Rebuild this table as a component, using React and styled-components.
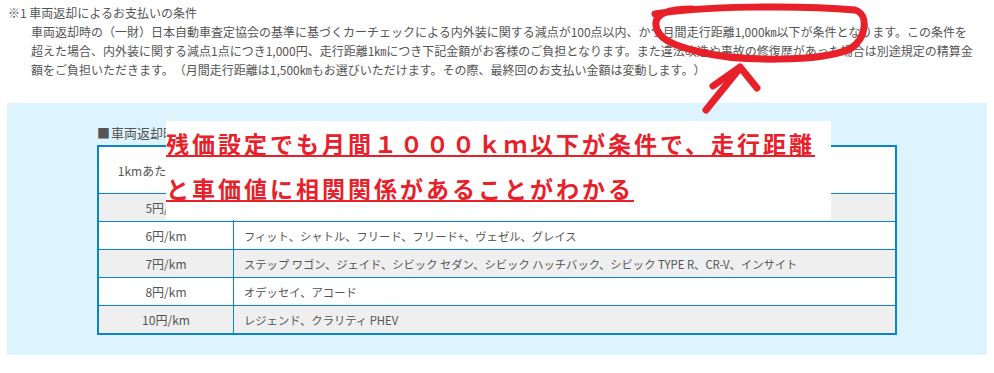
import React from "react";
import styled, { createGlobalStyle } from "styled-components";

const GlobalStyle = createGlobalStyle`
  body {
    margin: 0;
    background: #fff;
    font-family: "Noto Sans CJK JP", "Liberation Sans", sans-serif;
    color: #555;
    text-spacing-trim: space-all;
  }
`;

const Page = styled.div`
  position: relative;
  width: 994px;
  height: 373px;
  padding: 3px 7px 0;
  box-sizing: border-box;
  overflow: hidden;
`;

const Note = styled.div`
  font-size: 12px;
  line-height: 19px;
  padding-left: 1px;
`;

const NoteBody = styled.p`
  margin: 0;
  padding-left: 23px;
  white-space: nowrap;
`;

const Panel = styled.section`
  position: relative;
  margin-top: 24px;
  background: #ddf3fd;
  padding: 20px 0 20px 90px;
  width: 980px;
  box-sizing: border-box;
`;

const Caption = styled.div`
  font-size: 13px;
  line-height: 19px;
  margin-bottom: 3px;
  &::before {
    content: "■";
    color: #555;
    margin-right: 1px;
  }
`;

const Table = styled.table`
  width: 800px;
  border-collapse: collapse;
  border: 2px solid #0a84d2;
  color: #555;
`;

const Row = styled.tr`
  background: ${(p) => (p.$shade ? "#efefef" : "#fff")};
`;

const Cell = styled.td`
  border: 1px solid #0a84d2;
  height: ${(p) => (p.$head ? "46px" : "27px")};
  padding: 0 10px;
  font-size: ${(p) => (p.$narrow ? "12px" : "11.3px")};
  text-align: ${(p) => (p.$center ? "center" : "left")};
  width: ${(p) => (p.$narrow ? "114px" : "auto")};
  white-space: nowrap;
`;

const Callout = styled.div`
  position: absolute;
  left: 159px;
  top: 18px;
  width: 665px;
  height: 99px;
  background: #fff;
  color: #e8202a;
  font-size: 23px;
  font-weight: 700;
  letter-spacing: 3px;
  line-height: 45px;
  white-space: nowrap;
`;

const CalloutLine = styled.div`
  span {
    text-decoration: underline;
    text-decoration-thickness: 2px;
    text-underline-offset: 2px;
  }
`;

const Marks = styled.svg`
  position: absolute;
  left: 0;
  top: 0;
  pointer-events: none;
`;

const rates = [
  { rate: "5円/km", cars: "N-BOX、N-WGN、N-ONE、N-VAN" },
  { rate: "6円/km", cars: "フィット、シャトル、フリード、フリード+、ヴェゼル、グレイス" },
  {
    rate: "7円/km",
    cars: "ステップ ワゴン、ジェイド、シビック セダン、シビック ハッチバック、シビック TYPE R、CR-V、インサイト",
  },
  { rate: "8円/km", cars: "オデッセイ、アコード" },
  { rate: "10円/km", cars: "レジェンド、クラリティ PHEV" },
];

export default function App() {
  return (
    <>
      <GlobalStyle />
      <Page>
        <Note>
          ※1 車両返却によるお支払いの条件
          <NoteBody>
            車両返却時の（一財）日本自動車査定協会の基準に基づくカーチェックによる内外装に関する減点が100点以内、かつ月間走行距離1,000㎞以下が条件となります。この条件を
            <br />
            超えた場合、内外装に関する減点1点につき1,000円、走行距離1㎞につき下記金額がお客様のご負担となります。また違法改造や事故の修復歴があった場合は別途規定の精算金
            <br />
            額をご負担いただきます。（月間走行距離は1,500㎞もお選びいただけます。その際、最終回のお支払い金額は変動します。）
          </NoteBody>
        </Note>

        <Panel>
          <Caption>車両返却時の走行距離精算金額</Caption>
          <Table>
            <tbody>
              <Row>
                <Cell $head $center $narrow>1kmあたりの金額</Cell>
                <Cell $head $center>対象車種</Cell>
              </Row>
              {rates.map((r, i) => (
                <Row key={r.rate} $shade={i % 2 === 0}>
                  <Cell $center $narrow>{r.rate}</Cell>
                  <Cell>{r.cars}</Cell>
                </Row>
              ))}
            </tbody>
          </Table>

          <Callout>
            <CalloutLine>
              <span>残価設定でも月間１０００ｋｍ以下が条件で、走行距離</span>
            </CalloutLine>
            <CalloutLine>
              <span>と車価値に相関関係があることがわかる</span>
            </CalloutLine>
          </Callout>
        </Panel>

        {/* hand-drawn loop and arrow */}
        <Marks width="994" height="373" viewBox="0 0 994 373">
          <g fill="none" stroke="#e8202a" strokeWidth="7" strokeLinecap="round" strokeLinejoin="round">
            <path d="M655 14 C700 6 800 5 855 10 C869 14 867 38 850 49 C820 62 740 62 700 52 C674 46 654 38 656 22 C657 14 668 9 692 9" />
            <path d="M706 110 L740 68" />
            <path d="M713 86 L740 67 L757 88" />
          </g>
        </Marks>
      </Page>
    </>
  );
}
